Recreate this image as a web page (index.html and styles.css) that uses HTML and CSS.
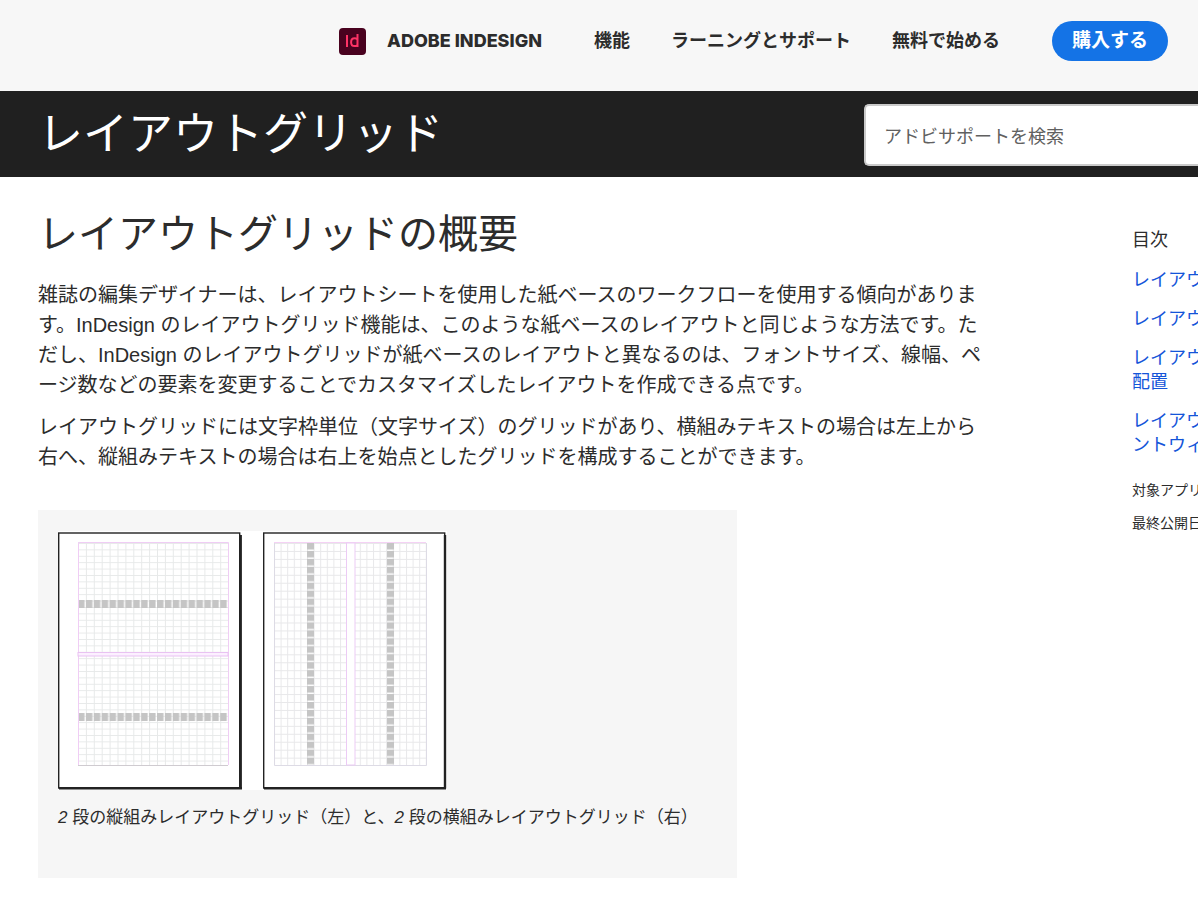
FILE: index.html
```html
<!DOCTYPE html>
<html lang="ja">
<head>
<meta charset="utf-8">
<title>レイアウトグリッド</title>
<link rel="stylesheet" href="styles.css">
</head>
<body>
<header class="topbar">
  <a class="brand" href="#">
    <svg class="brand-icon" viewBox="0 0 27 27" aria-hidden="true">
      <rect width="27" height="27" rx="4" fill="#49021f"/>
      <g fill="none" stroke="#ff3366" stroke-width="2">
        <path d="M8 7v12"/>
        <path d="M18.500 6v13"/>
        <path d="M18.500 11.200c-1-.8-2-1-3-1-2 0-3.400 1.500-3.400 4 0 2.600 1.400 3.900 3.400 3.900 1.200 0 2.200-.3 3-.8"/>
      </g>
    </svg>
    <span class="brand-name">ADOBE INDESIGN</span>
  </a>
  <nav class="nav">
    <a href="#">機能</a>
    <a href="#">ラーニングとサポート</a>
    <a href="#">無料で始める</a>
  </nav>
  <button class="buy" type="button">購入する</button>
</header>

<div class="banner">
  <h1>レイアウトグリッド</h1>
  <input class="search" type="search" placeholder="アドビサポートを検索" aria-label="アドビサポートを検索">
</div>

<div class="page">
  <main class="content">
    <h2>レイアウトグリッドの概要</h2>
    <p>雑誌の編集デザイナーは、レイアウトシートを使用した紙ベースのワークフローを使用する傾向があります。InDesign のレイアウトグリッド機能は、このような紙ベースのレイアウトと同じような方法です。ただし、InDesign のレイアウトグリッドが紙ベースのレイアウトと異なるのは、フォントサイズ、線幅、ページ数などの要素を変更することでカスタマイズしたレイアウトを作成できる点です。</p>
    <p>レイアウトグリッドには文字枠単位（文字サイズ）のグリッドがあり、横組みテキストの場合は左上から右へ、縦組みテキストの場合は右上を始点としたグリッドを構成することができます。</p>
    <figure class="figure">
      <svg class="diagram" viewBox="0 0 389 259" aria-hidden="true">
        <defs>
          <pattern id="gridA" x="20" y="12" width="7.900" height="6.400" patternUnits="userSpaceOnUse">
            <path d="M0 .5H7.900M.5 0V6.400" stroke="#e7e9e9" fill="none"/>
          </pattern>
          <pattern id="gridB" x="216" y="12" width="6.600" height="7.950" patternUnits="userSpaceOnUse">
            <path d="M0 .5H6.600M.5 0V7.950" stroke="#e8e8ea" fill="none"/>
          </pattern>
          <pattern id="cellsA" x="20" y="0" width="7.900" height="300" patternUnits="userSpaceOnUse">
            <rect width="6.500" height="300" fill="#c5c5c5"/>
          </pattern>
          <pattern id="cellsB" x="0" y="12" width="400" height="7.950" patternUnits="userSpaceOnUse">
            <rect width="400" height="6.500" fill="#c5c5c5"/>
          </pattern>
        </defs>
        <rect width="389" height="259" fill="#fff"/>
        <g fill="none" stroke="#222">
          <rect x=".7" y="2" width="181" height="255" stroke-width="1.400"/>
          <path d="M182.700 4V257.500M1 257.200H184" stroke-width="2.400"/>
          <rect x="205.700" y="2" width="181" height="255" stroke-width="1.400"/>
          <path d="M387 4V257.500M206 257.200H388" stroke-width="2.400"/>
        </g>
        <rect x="20" y="11" width="150" height="223" fill="url(#gridA)"/>
        <rect x="20" y="69" width="150" height="8" fill="url(#cellsA)"/>
        <rect x="20" y="182" width="150" height="8" fill="url(#cellsA)"/>
        <path d="M20 234.500H170" stroke="#cfcbd0"/>
        <path d="M20.500 234V11.500H170.500V234" fill="none" stroke="#f0cdf5"/>
        <rect x="20" y="121.500" width="150" height="3.500" fill="#fcf0ff" stroke="#e9c2f2"/>
        <rect x="216" y="12" width="152" height="222" fill="url(#gridB)"/>
        <rect x="249" y="12" width="7" height="222" fill="url(#cellsB)"/>
        <rect x="329" y="12" width="7" height="222" fill="url(#cellsB)"/>
        <path d="M216.500 12V234.500H368.500V12" fill="none" stroke="#dddbe5"/>
        <path d="M216 11.500H368" stroke="#f5d2f5"/>
        <rect x="288.500" y="12" width="8.500" height="222" fill="#fff" stroke="#eccbf5"/>
      </svg>
      <figcaption><i>2</i> 段の縦組みレイアウトグリッド（左）と、<i>2</i> 段の横組みレイアウトグリッド（右）</figcaption>
    </figure>
  </main>
  <aside class="sidebar">
    <h3>目次</h3>
    <ul>
      <li><a href="#">レイアウ</a></li>
      <li><a href="#">レイアウ</a></li>
      <li><a href="#">レイアウ<br>配置</a></li>
      <li><a href="#">レイアウ<br>ントウィ</a></li>
    </ul>
    <p>対象アプリ</p>
    <p>最終公開日</p>
  </aside>
</div>
</body>
</html>
```
FILE: styles.css
```css
* {
  box-sizing: border-box;
}

body {
  margin: 0;
  overflow-x: hidden;
  background: #fff;
  color: #2c2c2c;
  font-family: "Liberation Sans", "Noto Sans CJK JP", sans-serif;
  font-size: 20px;
  line-height: 30px;
}

h1, h2, h3, p, ul, figure {
  margin: 0;
  padding: 0;
  font-weight: 400;
}

a {
  color: inherit;
  text-decoration: none;
}

.topbar {
  display: flex;
  align-items: center;
  justify-content: flex-end;
  padding: 21px 30px 30px 38px;
  background: #f7f7f7;
  font-size: 18px;
  font-weight: 700;
  white-space: nowrap;
}

.brand {
  display: flex;
  align-items: center;
  gap: 21px;
}

.brand-icon {
  width: 27px;
  height: 27px;
}

.brand-name {
  font-family: Inter, "Liberation Sans", sans-serif;
  font-size: 18px;
  font-weight: 800;
}

.nav {
  display: flex;
  gap: 41px;
  margin: 0 52px;
}

.buy {
  height: 40px;
  padding: 0 20px;
  border: 0;
  border-radius: 20px;
  background: #1473e6;
  color: #fff;
  font: inherit;
  font-size: 19px;
}

.banner {
  display: flex;
  align-items: center;
  justify-content: space-between;
  padding: 13px 0 11px 38px;
  background: #202020;
  color: #fff;
}

.banner h1 {
  font-size: 45px;
  line-height: 60px;
}

.search {
  width: 334px;
  height: 62px;
  padding: 4px 18px 0;
  border: 2px solid #cacaca;
  border-right: 0;
  border-radius: 5px 0 0 5px;
  background: #fff;
  font: inherit;
  font-size: 18px;
}

.search::placeholder {
  color: #606060;
  opacity: 1;
}

.page {
  display: grid;
  grid-template-columns: minmax(0, 1fr) 66px;
  padding: 32px 0 26px 38px;
}

.content {
  max-width: 950px;
  line-break: normal;
}

.content h2 {
  margin-bottom: 21px;
  font-size: 40px;
  line-height: 50px;
}

.content p {
  margin-bottom: 12px;
}

.figure {
  max-width: 699px;
  margin-top: 38px;
  padding: 21px 20px 45px;
  background: #f6f6f6;
}

.diagram {
  display: block;
  width: 389px;
  height: 259px;
}

.figure figcaption {
  margin-top: 13px;
  font-size: 17px;
}

.sidebar {
  padding-top: 19px;
  font-size: 18px;
  line-height: 24px;
  white-space: nowrap;
  overflow: hidden;
}

.sidebar h3 {
  font-size: 18px;
}

.sidebar ul {
  margin: 16px 0 21px;
  list-style: none;
  color: #1455d9;
}

.sidebar li {
  margin-bottom: 15px;
}

.sidebar p {
  margin-bottom: 9px;
  font-size: 14px;
}
```
